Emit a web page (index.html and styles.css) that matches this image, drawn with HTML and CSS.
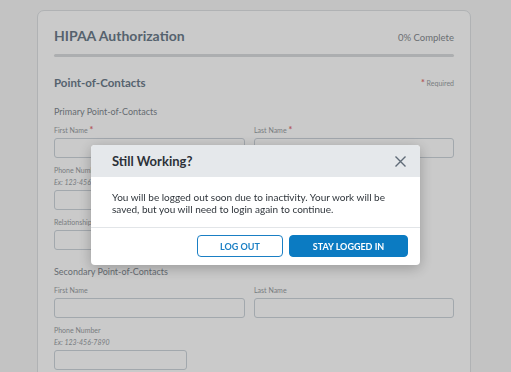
FILE: index.html
```html
<!DOCTYPE html>
<html lang="en">
<head>
    <meta charset="UTF-8">
    <meta name="viewport" content="width=device-width, initial-scale=1.0">
    <title>HIPAA Authorization</title>
    <link rel="stylesheet" href="styles.css">
</head>
<body>
    <div class="card">
        <div class="card-header">
            <h1>HIPAA Authorization</h1>
            <span class="progress-text">0% Complete</span>
        </div>
        <div class="progress"><div class="progress-fill"></div></div>

        <div class="section-header">
            <h2>Point-of-Contacts</h2>
            <span class="required"><span class="star">*</span> Required</span>
        </div>

        <!-- Primary contact -->
        <h3>Primary Point-of-Contacts</h3>
        <div class="row">
            <div class="field">
                <label>First Name <span class="star">*</span></label>
                <div class="input"></div>
            </div>
            <div class="field">
                <label>Last Name <span class="star">*</span></label>
                <div class="input"></div>
            </div>
        </div>
        <div class="field">
            <label>Phone Number</label>
            <div class="hint">Ex: 123-456-7890</div>
            <div class="input short"></div>
        </div>
        <div class="field">
            <label>Relationship</label>
            <div class="input short"></div>
        </div>

        <!-- Secondary contact -->
        <h3 class="secondary">Secondary Point-of-Contacts</h3>
        <div class="row">
            <div class="field">
                <label>First Name</label>
                <div class="input"></div>
            </div>
            <div class="field">
                <label>Last Name</label>
                <div class="input"></div>
            </div>
        </div>
        <div class="field">
            <label>Phone Number</label>
            <div class="hint">Ex: 123-456-7890</div>
            <div class="input short"></div>
        </div>
    </div>

    <!-- Session timeout modal -->
    <div class="overlay">
        <div class="modal">
            <div class="modal-header">
                <h2>Still Working?</h2>
                <svg class="close" width="13" height="13" viewBox="0 0 13 13">
                    <path d="M1.5 1.5 L11.5 11.5 M11.5 1.5 L1.5 11.5" stroke="#5f6b77" stroke-width="1.4" fill="none"/>
                </svg>
            </div>
            <div class="modal-body">
                <p>You will be logged out soon due to inactivity. Your work will be saved, but you will need to login again to continue.</p>
            </div>
            <div class="modal-footer">
                <button class="btn btn-outline">Log Out</button>
                <button class="btn btn-primary">Stay Logged In</button>
            </div>
        </div>
    </div>
</body>
</html>
```

FILE: styles.css
```css
body {
    margin: 0;
    font-family: Lato, "Noto Sans", sans-serif;
    background-color: #f4f4f4;
    padding-top: 10px;
}

.card {
    width: 400px;
    margin: 0 0 0 37px;
    background: #fdfdfd;
    border: 1px solid #dcdfe2;
    border-radius: 7px;
    padding: 15px 16px 20px;
}

.card-header {
    display: flex;
    justify-content: space-between;
    align-items: baseline;
}

h1 {
    margin: 0;
    font-size: 14px;
    line-height: 20px;
    font-weight: 700;
    color: #6c7b8a;
}

.progress-text {
    font-size: 9.5px;
    color: #858a8f;
}

.progress {
    margin-top: 8px;
    height: 3px;
    border-radius: 2px;
    background: #d8dadc;
}

.progress-fill {
    width: 0;
}

.section-header {
    display: flex;
    justify-content: space-between;
    align-items: center;
    margin-top: 17px;
}

h2 {
    margin: 0;
    font-size: 11.5px;
    line-height: 18px;
    font-weight: 700;
    color: #6c7b8a;
}

.required {
    font-size: 7px;
    color: #989da2;
}

.star {
    color: #e07070;
    font-size: 9px;
    line-height: 0;
    font-weight: 700;
}

h3 {
    margin: 13px 0 0;
    font-size: 9px;
    line-height: 14px;
    font-weight: 400;
    color: #80878e;
}

h3.secondary {
    margin-top: 15px;
}

.row {
    display: flex;
    gap: 9px;
}

.row .field:first-child {
    width: 191px;
}

.row .field:last-child {
    flex: 1;
}

.field {
    margin-top: 6px;
}

h3 + .row .field {
    margin-top: 5px;
}

label {
    display: block;
    height: 12px;
    font-size: 7px;
    line-height: 12px;
    color: #979ca1;
}

.hint {
    font-size: 7px;
    line-height: 12px;
    font-style: italic;
    color: #979ca1;
}

.input {
    margin-top: 2px;
    height: 18px;
    border: 1px solid #cbd2d9;
    border-radius: 3px;
    background: #fdfdfd;
}

.input.short {
    width: 131px;
}

/* Modal */
.overlay {
    position: fixed;
    top: 0;
    left: 0;
    width: 100%;
    height: 100%;
    background-color: rgba(0, 0, 0, 0.2);
    display: flex;
    justify-content: center;
    align-items: flex-start;
    padding-top: 145px;
    box-sizing: border-box;
}

.modal {
    width: 329px;
    background: #fff;
    border-radius: 4px;
    overflow: hidden;
    box-shadow: 0 3px 14px rgba(0, 0, 0, 0.25);
}

.modal-header {
    height: 32px;
    background: #e5e8eb;
    display: flex;
    justify-content: space-between;
    align-items: center;
    padding: 0 12px 0 21px;
}

.modal-header h2 {
    font-size: 13px;
    font-weight: 700;
    color: #2c3138;
}

.close {
    margin-right: 1px;
}

.modal-body {
    padding: 14px 21px 12px;
    border-bottom: 1px solid #e2e5e8;
}

.modal-body p {
    margin: 0;
    font-size: 10px;
    line-height: 12px;
    color: #2f353b;
}

.modal-footer {
    display: flex;
    justify-content: flex-end;
    gap: 6px;
    padding: 7px 12px 8px;
}

.btn {
    height: 22px;
    border-radius: 4px;
    font-family: Lato, "Noto Sans", sans-serif;
    font-size: 9px;
    font-weight: 700;
    text-transform: uppercase;
    cursor: pointer;
}

.btn-outline {
    width: 86px;
    background: #fff;
    border: 1px solid #1a7fc4;
    color: #1a7fc4;
}

.btn-primary {
    width: 119px;
    background: #0b7bc2;
    border: 1px solid #0b7bc2;
    color: #fff;
}
```
